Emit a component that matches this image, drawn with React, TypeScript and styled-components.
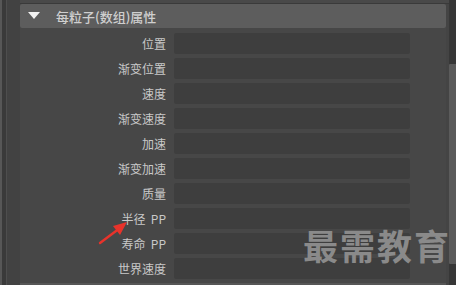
import React from "react";
import styled, { createGlobalStyle } from "styled-components";

const Global = createGlobalStyle`
  html, body { margin: 0; padding: 0; background: #444444; }
  body { width: 456px; height: 285px; overflow: hidden; }
  #root { width: 456px; height: 285px; }
`;

const Root = styled.div`
  position: relative;
  width: 456px;
  height: 285px;
  display: flex;
  background: #444444;
  overflow: hidden;
  font-family: "Noto Sans CJK SC", "Noto Sans", sans-serif;
`;

const Gutter = styled.div`
  width: 20px;
  flex: none;
  display: flex;
`;

const GutterEdge = styled.div`
  width: 2px;
  background: #575757;
`;

const GutterDark = styled.div`
  width: 4px;
  background: #3a3a3a;
`;

const GutterMid = styled.div`
  width: 1px;
  background: #4e4e4e;
`;

const GutterFill = styled.div`
  flex: 1;
  background: #424242;
`;

const Main = styled.div`
  width: 429px;
  flex: none;
  display: flex;
  flex-direction: column;
  border-top: 3px solid #494949;
  box-shadow: inset 0 1px 0 #3a3a3a;
  padding-top: 1px;
`;

const Header = styled.div`
  height: 24px;
  width: 426px;
  flex: none;
  background: #5d5d5d;
  border-radius: 2px;
  display: flex;
  align-items: center;
  box-sizing: border-box;
  padding-left: 8px;
`;

const Triangle = styled.div`
  width: 0;
  height: 0;
  border-left: 6.5px solid transparent;
  border-right: 6.5px solid transparent;
  border-top: 7px solid #f2f2f2;
  margin-top: -1px;
`;

const Title = styled.span`
  margin-left: 16px;
  color: #cfcfcf;
  font-size: 13px;
  font-weight: 500;
  line-height: 1;
`;

const Body = styled.div`
  width: 426px;
  flex: 1;
  background: #474747;
  border-bottom: 2px solid #565656;
  display: flex;
  flex-direction: column;
  gap: 4px;
  padding-top: 5px;
  box-sizing: border-box;
`;

const Row = styled.div`
  height: 21px;
  display: grid;
  grid-template-columns: 146px 236px;
  column-gap: 8px;
  align-items: center;
`;

const Label = styled.span`
  text-align: right;
  color: #c9c9c9;
  font-size: 12px;
  line-height: 21px;
  white-space: pre;
`;

const Field = styled.div`
  height: 21px;
  background: #3e3e3e;
  border-radius: 2px;
`;

const Scroll = styled.div`
  width: 7px;
  flex: none;
  background: #373737;
  display: flex;
  flex-direction: column;
  position: relative;
  z-index: 2;
`;

const Thumb = styled.div`
  margin-top: 64px;
  height: 200px;
  background: #5b5b5b;
  border-radius: 1px 0 0 1px;
`;

const Watermark = styled.div`
  position: absolute;
  left: 303px;
  top: 222px;
  font-size: 35px;
  font-weight: 700;
  color: #8a8a8a;
  letter-spacing: 2px;
  line-height: 1.3;
  white-space: nowrap;
  z-index: 1;
  font-family: "Noto Sans CJK SC", sans-serif;
`;

const Arrow = styled.svg`
  position: absolute;
  left: 96px;
  top: 216px;
  z-index: 1;
`;

const labels = [
  "位置",
  "渐变位置",
  "速度",
  "渐变速度",
  "加速",
  "渐变加速",
  "质量",
  "半径  PP",
  "寿命  PP",
  "世界速度",
];

export default function App() {
  return (
    <Root>
      <Global />
      <Gutter>
        <GutterEdge />
        <GutterDark />
        <GutterMid />
        <GutterFill />
      </Gutter>
      <Main>
        <Header>
          <Triangle />
          <Title>每粒子(数组)属性</Title>
        </Header>
        <Body>
          {labels.map((l) => (
            <Row key={l}>
              <Label>{l}</Label>
              <Field />
            </Row>
          ))}
        </Body>
      </Main>
      <Scroll>
        <Thumb />
      </Scroll>
      <Watermark>最需教育</Watermark>
      <Arrow width="36" height="32" viewBox="0 0 36 32">
        <line x1="4" y1="27" x2="24" y2="12" stroke="#e8332b" strokeWidth="2.4" strokeLinecap="round" />
        <polygon points="31,6 17,10 24,19" fill="#e8332b" />
      </Arrow>
    </Root>
  );
}
